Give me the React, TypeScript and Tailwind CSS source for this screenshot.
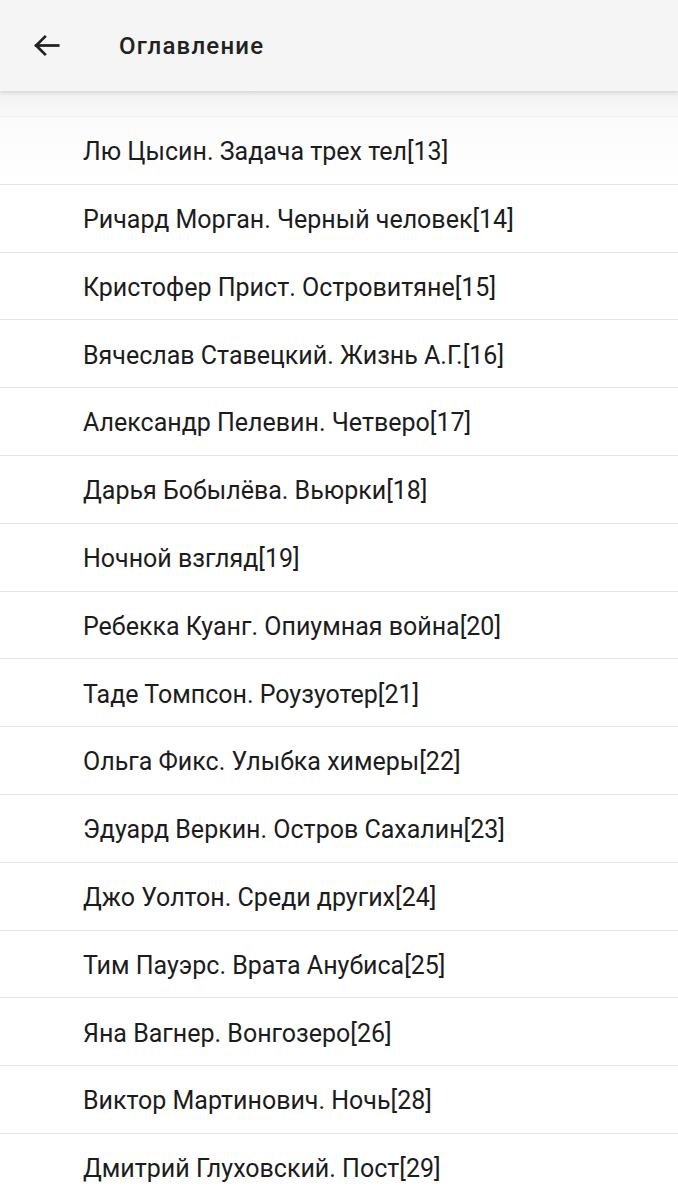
import React from "react";

const items = [
  "Лю Цысин. Задача трех тел[13]",
  "Ричард Морган. Черный человек[14]",
  "Кристофер Прист. Островитяне[15]",
  "Вячеслав Ставецкий. Жизнь А.Г.[16]",
  "Александр Пелевин. Четверо[17]",
  "Дарья Бобылёва. Вьюрки[18]",
  "Ночной взгляд[19]",
  "Ребекка Куанг. Опиумная война[20]",
  "Таде Томпсон. Роузуотер[21]",
  "Ольга Фикс. Улыбка химеры[22]",
  "Эдуард Веркин. Остров Сахалин[23]",
  "Джо Уолтон. Среди других[24]",
  "Тим Пауэрс. Врата Анубиса[25]",
  "Яна Вагнер. Вонгозеро[26]",
  "Виктор Мартинович. Ночь[28]",
  "Дмитрий Глуховский. Пост[29]",
];

export default function App() {
  return (
    <div
      className="w-[678px] h-[1200px] overflow-hidden bg-white relative"
      style={{ fontFamily: "Roboto, 'Noto Sans', sans-serif" }}
    >
      <header className="relative z-10 h-[91px] bg-[#f5f5f5] flex items-center shadow-[0_2px_4px_rgba(0,0,0,0.12)]">
        <button className="w-[94px] h-full flex items-center pl-[30px]">
          <svg width="33" height="33" viewBox="0 0 24 24" fill="none" stroke="#212121" strokeWidth="2" strokeLinecap="square">
            <path d="M20.5 12H4.5" />
            <path d="M11.5 5l-7 7 7 7" strokeLinecap="butt" />
          </svg>
        </button>
        <h1 className="ml-[25px] text-[24px] font-medium text-[#212121] tracking-[1.2px]">Оглавление</h1>
      </header>

      <div className="h-[26px] bg-gradient-to-b from-[#f2f2f2] to-[#f9f9f9] border-b border-[#f0f0f0]" />

      <ul>
        {items.map((t, i) => (
          <li
            key={i}
            className={
              "h-[67.8px] flex items-center pl-[83px] pt-[3px] border-b border-[#e6e6e6] text-[25px] text-[#1c1c1c] " +
              (i === 0 ? "bg-gradient-to-b from-[#fbfbfb] to-white" : "")
            }
          >
            {t}
          </li>
        ))}
      </ul>
    </div>
  );
}
